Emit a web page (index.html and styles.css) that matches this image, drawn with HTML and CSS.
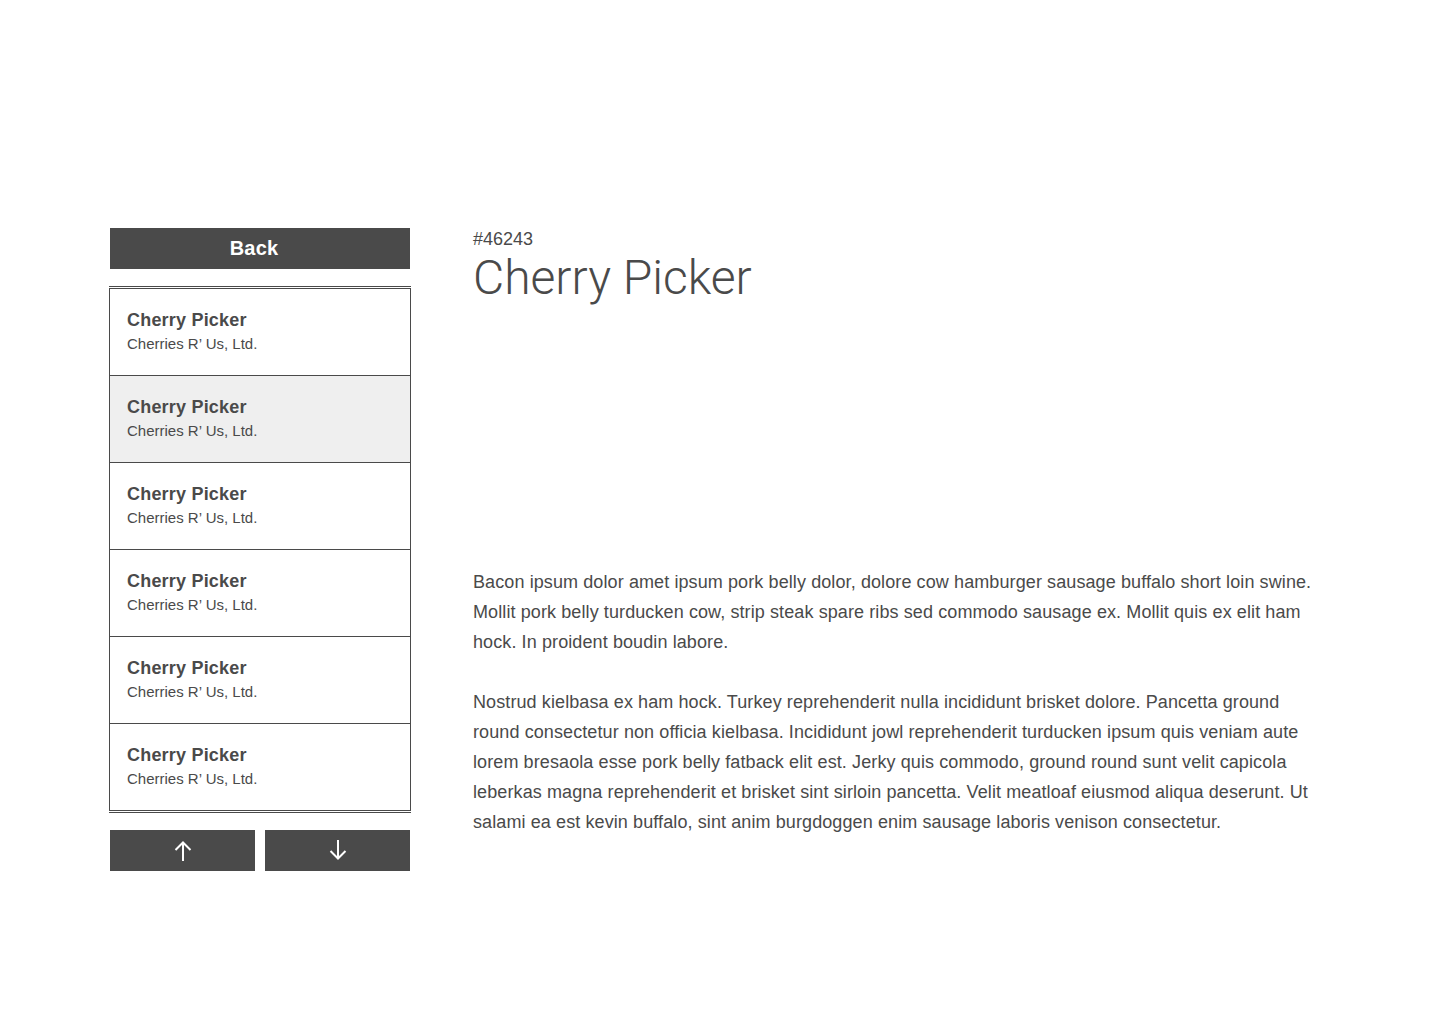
FILE: index.html
```html
<!DOCTYPE html>
<html lang="en">
<head>
<meta charset="utf-8">
<title>Cherry Picker</title>
<link rel="stylesheet" href="styles.css">
</head>
<body>
<div class="page">
  <aside class="sidebar">
    <button class="btn back">Back</button>
    <div class="list-frame">
      <ul class="list">
        <li class="item"><span class="item-title">Cherry Picker</span><span class="item-sub">Cherries R’ Us, Ltd.</span></li>
        <li class="item active"><span class="item-title">Cherry Picker</span><span class="item-sub">Cherries R’ Us, Ltd.</span></li>
        <li class="item"><span class="item-title">Cherry Picker</span><span class="item-sub">Cherries R’ Us, Ltd.</span></li>
        <li class="item"><span class="item-title">Cherry Picker</span><span class="item-sub">Cherries R’ Us, Ltd.</span></li>
        <li class="item"><span class="item-title">Cherry Picker</span><span class="item-sub">Cherries R’ Us, Ltd.</span></li>
        <li class="item"><span class="item-title">Cherry Picker</span><span class="item-sub">Cherries R’ Us, Ltd.</span></li>
      </ul>
    </div>
    <div class="pager">
      <button class="btn arrow" aria-label="Up">
        <svg width="20" height="22" viewBox="0 0 20 22"><path d="M10 2.5V21M2.5 10L10 2.5L17.5 10" fill="none" stroke="#fff" stroke-width="2"/></svg>
      </button>
      <button class="btn arrow" aria-label="Down">
        <svg width="20" height="22" viewBox="0 0 20 22"><path d="M10 0V18.5M2.5 11L10 18.5L17.5 11" fill="none" stroke="#fff" stroke-width="2"/></svg>
      </button>
    </div>
  </aside>
  <main class="detail">
    <div class="code">#46243</div>
    <h1 class="title">Cherry Picker</h1>
    <div class="desc">
      <p>Bacon ipsum dolor amet ipsum pork belly dolor, dolore cow hamburger sausage buffalo short loin swine. Mollit pork belly turducken cow, strip steak spare ribs sed commodo sausage ex. Mollit quis ex elit ham hock. In proident boudin labore.</p>
      <p>Nostrud kielbasa ex ham hock. Turkey reprehenderit nulla incididunt brisket dolore. Pancetta ground round consectetur non officia kielbasa. Incididunt jowl reprehenderit turducken ipsum quis veniam aute lorem bresaola esse pork belly fatback elit est. Jerky quis commodo, ground round sunt velit capicola leberkas magna reprehenderit et brisket sint sirloin pancetta. Velit meatloaf eiusmod aliqua deserunt. Ut salami ea est kevin buffalo, sint anim burgdoggen enim sausage laboris venison consectetur.</p>
    </div>
  </main>
</div>
</body>
</html>
```

FILE: styles.css
```css
* { box-sizing: border-box; }

html, body {
  margin: 0;
  padding: 0;
  background: #fff;
}

body {
  font-family: "Liberation Sans", Arial, sans-serif;
  color: #4a4a4a;
}

.page {
  display: flex;
  align-items: flex-start;
  gap: 63px;
  padding: 228px 0 0 110px;
}

.sidebar {
  width: 300px;
  flex: none;
  display: flex;
  flex-direction: column;
}

.btn {
  border: 0;
  margin: 0;
  background: #4a4a4a;
  color: #fff;
  font-family: "Liberation Sans", Arial, sans-serif;
  cursor: pointer;
  display: flex;
  align-items: center;
  justify-content: center;
  padding: 0;
}

.back {
  height: 41px;
  width: 100%;
  padding-right: 12px;
  font-size: 20px;
  font-weight: 700;
  letter-spacing: 0.2px;
}

.list-frame {
  margin: 17px -1px 0;
  border-top: 1px solid #4a4a4a;
  border-bottom: 1px solid #4a4a4a;
  padding: 1px 0;
}

.list {
  list-style: none;
  margin: 0;
  padding: 0;
  border: 1px solid #4a4a4a;
}

.item {
  height: 87px;
  padding: 20px 17px 0;
  border-bottom: 1px solid #4a4a4a;
  display: flex;
  flex-direction: column;
}

.item:last-child {
  height: 86px;
  border-bottom: 0;
}

.item.active {
  background: #efefef;
}

.item-title {
  font-size: 18px;
  line-height: 22px;
  font-weight: 700;
  letter-spacing: 0.2px;
}

.item-sub {
  margin-top: 3px;
  font-size: 15px;
  line-height: 20px;
}

.pager {
  margin-top: 17px;
  display: flex;
  gap: 10px;
}

.arrow {
  flex: 1;
  height: 41px;
}

.detail {
  width: 850px;
  flex: none;
}

.code {
  font-size: 18px;
  line-height: 22px;
}

.title {
  margin: 0;
  font-family: Roboto, "Liberation Sans", sans-serif;
  font-weight: 300;
  font-size: 48px;
  line-height: 56px;
}

.desc {
  margin-top: 261px;
  font-size: 18px;
  line-height: 30px;
  letter-spacing: 0.1px;
}

.desc p {
  margin: 0 0 30px;
}
```
